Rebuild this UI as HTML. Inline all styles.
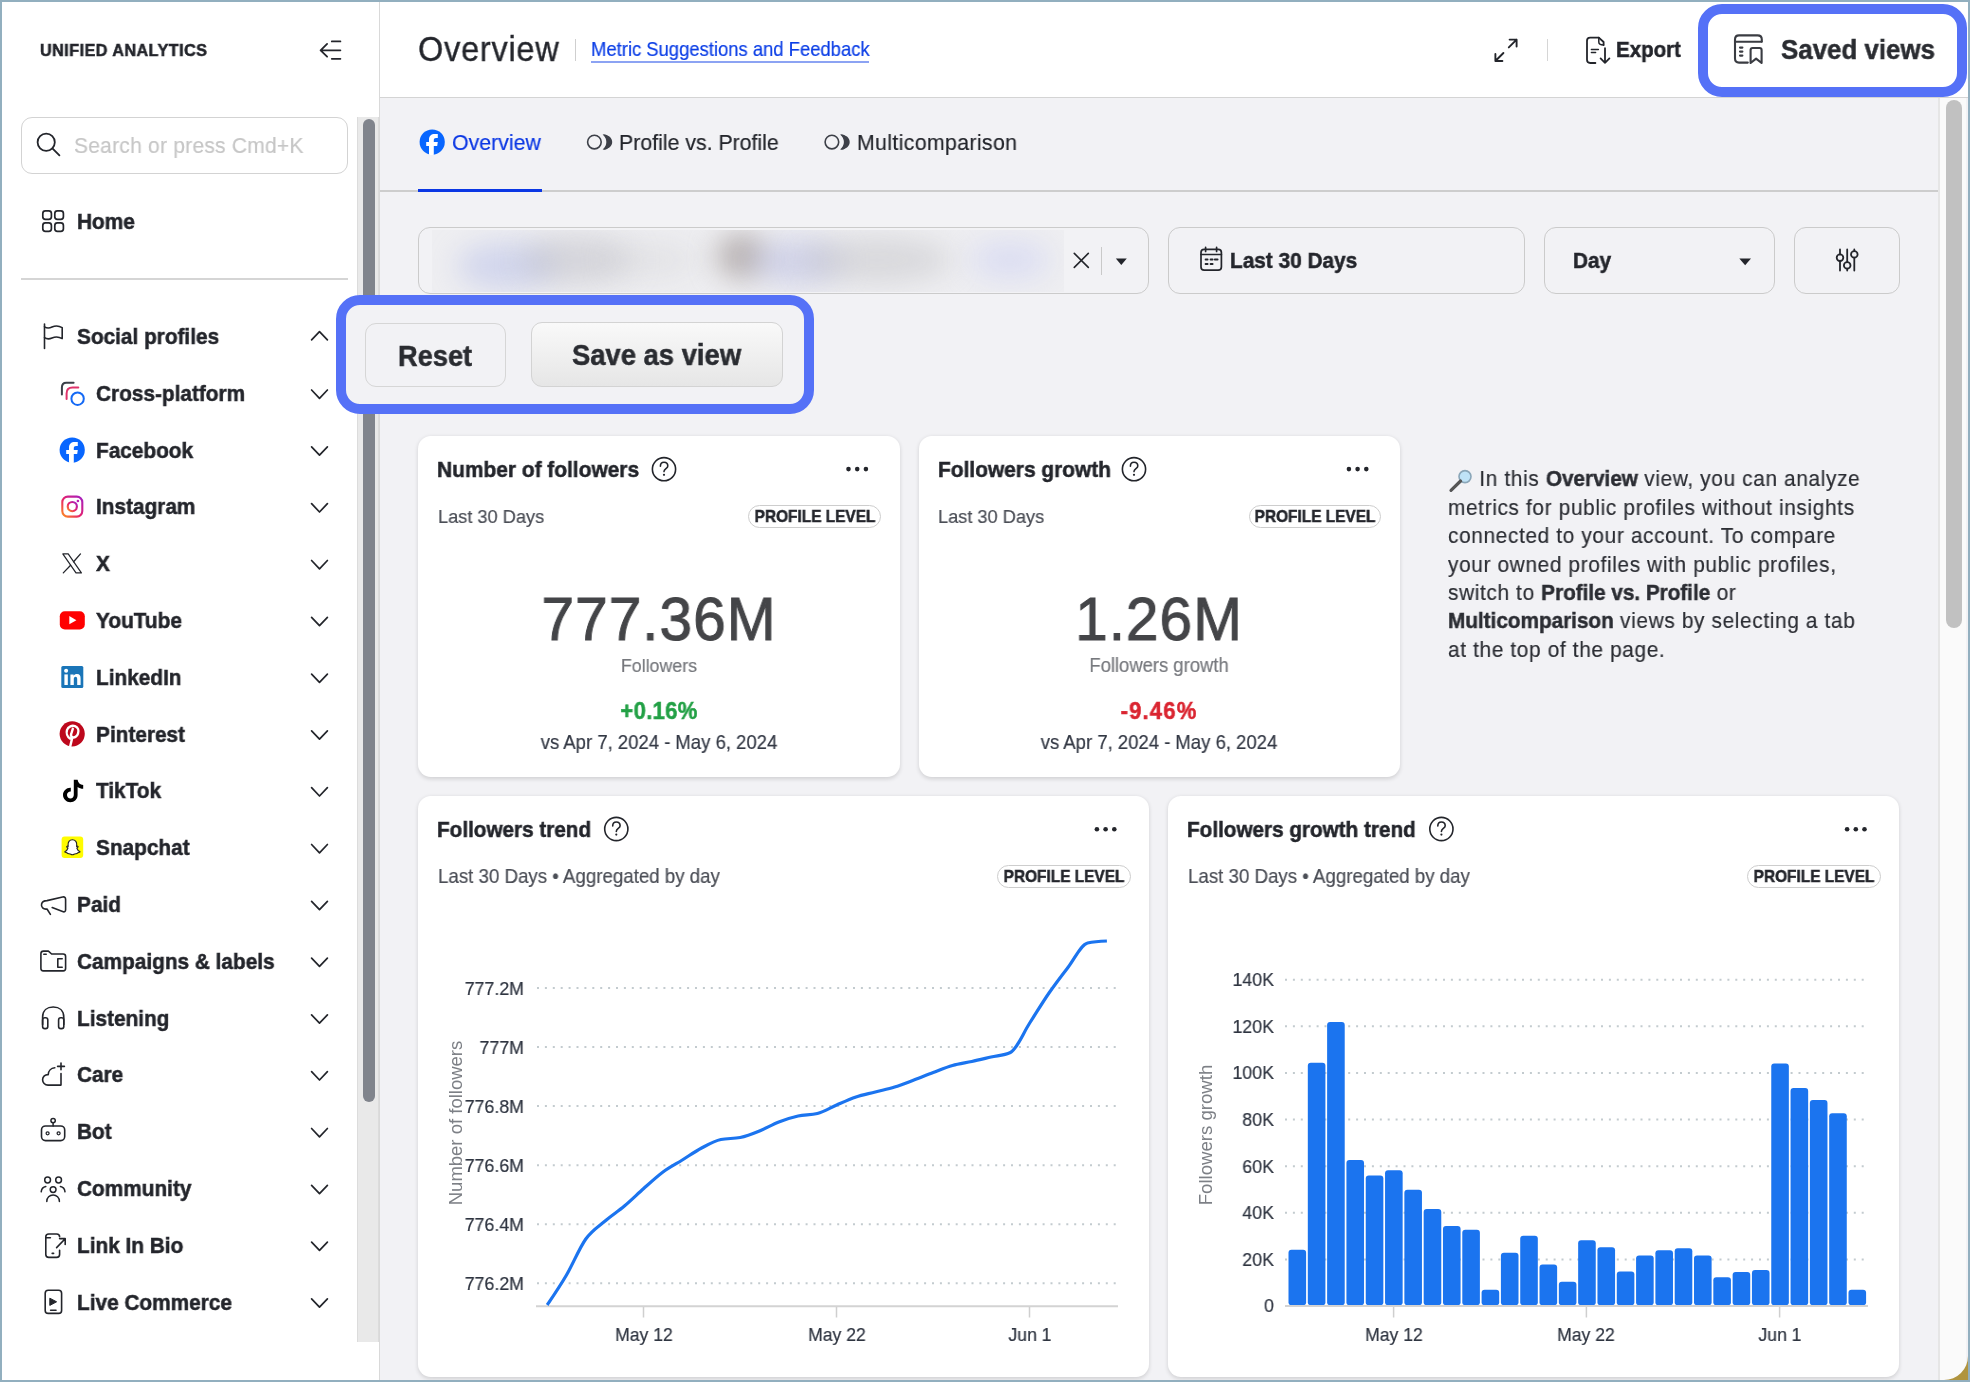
<!DOCTYPE html>
<html><head><meta charset="utf-8"><title>Overview</title>
<style>
html,body{margin:0;padding:0;width:1970px;height:1382px;overflow:hidden;background:#f2f2f5}
body{position:relative;font-family:"Liberation Sans", sans-serif;-webkit-font-smoothing:antialiased}
.t{position:absolute;white-space:nowrap;will-change:transform;font-family:"Liberation Sans", sans-serif}
b{font-weight:700}
</style></head><body>
<div style="position:absolute;left:2px;top:2px;width:377px;height:1378px;background:#fff"></div>
<div style="position:absolute;left:379px;top:2px;width:1px;height:1378px;background:#d9d9d9"></div>
<div class="t" style="left:39.50px;transform-origin:0 50%;transform:scaleX(0.9479);top:1.20px;font-size:17.09px;line-height:100px;font-weight:700;color:#23252b;letter-spacing:0.47px;-webkit-text-stroke:0.5px #23252b;">UNIFIED ANALYTICS</div>
<div style="position:absolute;left:21px;top:117px;width:327px;height:57px;box-sizing:border-box;border:1px solid #d3d3d3;border-radius:11px;background:#fff"></div>
<div class="t" style="left:73.50px;transform-origin:0 50%;transform:scaleX(0.9479);top:95.80px;font-size:22.15px;line-height:100px;font-weight:400;color:#c6c6c6;letter-spacing:0.26px;-webkit-text-stroke:0.2px #c6c6c6;">Search or press Cmd+K</div>
<div class="t" style="left:77.30px;transform-origin:0 50%;transform:scaleX(0.9479);top:172.10px;font-size:21.94px;line-height:100px;font-weight:700;color:#23252b;letter-spacing:0.00px;-webkit-text-stroke:0.5px #23252b;">Home</div>
<div style="position:absolute;left:21px;top:277.5px;width:327px;height:2.0px;background:#d5d5d5"></div>
<div style="position:absolute;left:357px;top:117px;width:22px;height:1224.5px;background:#e9e9e9;border-left:1px solid #dcdcdc;border-right:1px solid #dcdcdc;box-sizing:border-box"></div>
<div style="position:absolute;left:362.8px;top:119px;width:12.399999999999977px;height:983px;background:#80848c;border-radius:7px"></div>
<div class="t" style="left:77.30px;transform-origin:0 50%;transform:scaleX(0.9479);top:287.20px;font-size:21.94px;line-height:100px;font-weight:700;color:#23252b;letter-spacing:0.00px;-webkit-text-stroke:0.5px #23252b;">Social profiles</div>
<div class="t" style="left:96.30px;transform-origin:0 50%;transform:scaleX(0.9479);top:343.70px;font-size:21.94px;line-height:100px;font-weight:700;color:#23252b;letter-spacing:0.00px;-webkit-text-stroke:0.5px #23252b;">Cross-platform</div>
<div class="t" style="left:96.30px;transform-origin:0 50%;transform:scaleX(0.9479);top:400.60px;font-size:21.94px;line-height:100px;font-weight:700;color:#23252b;letter-spacing:0.00px;-webkit-text-stroke:0.5px #23252b;">Facebook</div>
<div class="t" style="left:96.30px;transform-origin:0 50%;transform:scaleX(0.9479);top:457.40px;font-size:21.94px;line-height:100px;font-weight:700;color:#23252b;letter-spacing:0.00px;-webkit-text-stroke:0.5px #23252b;">Instagram</div>
<div class="t" style="left:96.30px;transform-origin:0 50%;transform:scaleX(0.9479);top:514.20px;font-size:21.94px;line-height:100px;font-weight:700;color:#23252b;letter-spacing:0.00px;-webkit-text-stroke:0.5px #23252b;">X</div>
<div class="t" style="left:96.30px;transform-origin:0 50%;transform:scaleX(0.9479);top:571.00px;font-size:21.94px;line-height:100px;font-weight:700;color:#23252b;letter-spacing:0.00px;-webkit-text-stroke:0.5px #23252b;">YouTube</div>
<div class="t" style="left:96.30px;transform-origin:0 50%;transform:scaleX(0.9479);top:627.80px;font-size:21.94px;line-height:100px;font-weight:700;color:#23252b;letter-spacing:0.00px;-webkit-text-stroke:0.5px #23252b;">LinkedIn</div>
<div class="t" style="left:96.30px;transform-origin:0 50%;transform:scaleX(0.9479);top:684.60px;font-size:21.94px;line-height:100px;font-weight:700;color:#23252b;letter-spacing:0.00px;-webkit-text-stroke:0.5px #23252b;">Pinterest</div>
<div class="t" style="left:96.30px;transform-origin:0 50%;transform:scaleX(0.9479);top:741.40px;font-size:21.94px;line-height:100px;font-weight:700;color:#23252b;letter-spacing:0.00px;-webkit-text-stroke:0.5px #23252b;">TikTok</div>
<div class="t" style="left:96.30px;transform-origin:0 50%;transform:scaleX(0.9479);top:798.20px;font-size:21.94px;line-height:100px;font-weight:700;color:#23252b;letter-spacing:0.00px;-webkit-text-stroke:0.5px #23252b;">Snapchat</div>
<div class="t" style="left:77.30px;transform-origin:0 50%;transform:scaleX(0.9479);top:855.00px;font-size:21.94px;line-height:100px;font-weight:700;color:#23252b;letter-spacing:0.00px;-webkit-text-stroke:0.5px #23252b;">Paid</div>
<div class="t" style="left:77.30px;transform-origin:0 50%;transform:scaleX(0.9479);top:911.80px;font-size:21.94px;line-height:100px;font-weight:700;color:#23252b;letter-spacing:0.00px;-webkit-text-stroke:0.5px #23252b;">Campaigns &amp; labels</div>
<div class="t" style="left:77.30px;transform-origin:0 50%;transform:scaleX(0.9479);top:968.60px;font-size:21.94px;line-height:100px;font-weight:700;color:#23252b;letter-spacing:0.00px;-webkit-text-stroke:0.5px #23252b;">Listening</div>
<div class="t" style="left:77.30px;transform-origin:0 50%;transform:scaleX(0.9479);top:1025.40px;font-size:21.94px;line-height:100px;font-weight:700;color:#23252b;letter-spacing:0.00px;-webkit-text-stroke:0.5px #23252b;">Care</div>
<div class="t" style="left:77.30px;transform-origin:0 50%;transform:scaleX(0.9479);top:1082.20px;font-size:21.94px;line-height:100px;font-weight:700;color:#23252b;letter-spacing:0.00px;-webkit-text-stroke:0.5px #23252b;">Bot</div>
<div class="t" style="left:77.30px;transform-origin:0 50%;transform:scaleX(0.9479);top:1139.00px;font-size:21.94px;line-height:100px;font-weight:700;color:#23252b;letter-spacing:0.00px;-webkit-text-stroke:0.5px #23252b;">Community</div>
<div class="t" style="left:77.30px;transform-origin:0 50%;transform:scaleX(0.9479);top:1195.80px;font-size:21.94px;line-height:100px;font-weight:700;color:#23252b;letter-spacing:0.00px;-webkit-text-stroke:0.5px #23252b;">Link In Bio</div>
<div class="t" style="left:77.30px;transform-origin:0 50%;transform:scaleX(0.9479);top:1252.60px;font-size:21.94px;line-height:100px;font-weight:700;color:#23252b;letter-spacing:0.00px;-webkit-text-stroke:0.5px #23252b;">Live Commerce</div>
<svg style="position:absolute;left:0;top:0" width="1970" height="1382" viewBox="0 0 1970 1382"><path d="M327.1 43.9 L320.6 50.3 L327.1 56.7 M320.6 50.3 H340.4 M331.8 41.4 H340.4 M331.8 58.8 H340.4" stroke="#23252b" stroke-width="1.8" stroke-linecap="round" stroke-linejoin="round" fill="none" /><circle cx="46.2" cy="142.2" r="8.6" stroke="#23252b" stroke-width="1.8" fill="none"/><path d="M52.4 148.4 L59.4 155.4" stroke="#23252b" stroke-width="1.8" stroke-linecap="round" stroke-linejoin="round" fill="none" /><rect x="42.8" y="210.8" width="8.6" height="8.6" rx="2.6" stroke="#23252b" stroke-width="1.7" fill="none"/><rect x="54.8" y="210.8" width="8.6" height="8.6" rx="2.6" stroke="#23252b" stroke-width="1.7" fill="none"/><rect x="42.8" y="222.8" width="8.6" height="8.6" rx="2.6" stroke="#23252b" stroke-width="1.7" fill="none"/><rect x="54.8" y="222.8" width="8.6" height="8.6" rx="2.6" stroke="#23252b" stroke-width="1.7" fill="none"/><path d="M311.6 339.9 L319.5 331.6 L327.4 339.9" stroke="#23252b" stroke-width="1.7" stroke-linecap="round" stroke-linejoin="round" fill="none" /><path d="M311.6 390.0 L319.5 398.29999999999995 L327.4 390.0" stroke="#23252b" stroke-width="1.7" stroke-linecap="round" stroke-linejoin="round" fill="none" /><path d="M311.6 446.90000000000003 L319.5 455.2 L327.4 446.90000000000003" stroke="#23252b" stroke-width="1.7" stroke-linecap="round" stroke-linejoin="round" fill="none" /><path d="M311.6 503.7 L319.5 511.99999999999994 L327.4 503.7" stroke="#23252b" stroke-width="1.7" stroke-linecap="round" stroke-linejoin="round" fill="none" /><path d="M311.6 560.5000000000001 L319.5 568.8000000000001 L327.4 560.5000000000001" stroke="#23252b" stroke-width="1.7" stroke-linecap="round" stroke-linejoin="round" fill="none" /><path d="M311.6 617.3000000000001 L319.5 625.6 L327.4 617.3000000000001" stroke="#23252b" stroke-width="1.7" stroke-linecap="round" stroke-linejoin="round" fill="none" /><path d="M311.6 674.1 L319.5 682.4 L327.4 674.1" stroke="#23252b" stroke-width="1.7" stroke-linecap="round" stroke-linejoin="round" fill="none" /><path d="M311.6 730.9000000000001 L319.5 739.2 L327.4 730.9000000000001" stroke="#23252b" stroke-width="1.7" stroke-linecap="round" stroke-linejoin="round" fill="none" /><path d="M311.6 787.7 L319.5 796.0 L327.4 787.7" stroke="#23252b" stroke-width="1.7" stroke-linecap="round" stroke-linejoin="round" fill="none" /><path d="M311.6 844.5000000000001 L319.5 852.8000000000001 L327.4 844.5000000000001" stroke="#23252b" stroke-width="1.7" stroke-linecap="round" stroke-linejoin="round" fill="none" /><path d="M311.6 901.3000000000001 L319.5 909.6 L327.4 901.3000000000001" stroke="#23252b" stroke-width="1.7" stroke-linecap="round" stroke-linejoin="round" fill="none" /><path d="M311.6 958.1 L319.5 966.4 L327.4 958.1" stroke="#23252b" stroke-width="1.7" stroke-linecap="round" stroke-linejoin="round" fill="none" /><path d="M311.6 1014.9 L319.5 1023.1999999999999 L327.4 1014.9" stroke="#23252b" stroke-width="1.7" stroke-linecap="round" stroke-linejoin="round" fill="none" /><path d="M311.6 1071.7 L319.5 1080.0000000000002 L327.4 1071.7" stroke="#23252b" stroke-width="1.7" stroke-linecap="round" stroke-linejoin="round" fill="none" /><path d="M311.6 1128.5 L319.5 1136.8000000000002 L327.4 1128.5" stroke="#23252b" stroke-width="1.7" stroke-linecap="round" stroke-linejoin="round" fill="none" /><path d="M311.6 1185.3 L319.5 1193.6000000000001 L327.4 1185.3" stroke="#23252b" stroke-width="1.7" stroke-linecap="round" stroke-linejoin="round" fill="none" /><path d="M311.6 1242.1 L319.5 1250.4 L327.4 1242.1" stroke="#23252b" stroke-width="1.7" stroke-linecap="round" stroke-linejoin="round" fill="none" /><path d="M311.6 1298.8999999999999 L319.5 1307.2 L327.4 1298.8999999999999" stroke="#23252b" stroke-width="1.7" stroke-linecap="round" stroke-linejoin="round" fill="none" /><path d="M44.5 324.0 V348.4" stroke="#23252b" stroke-width="1.6" stroke-linecap="round" stroke-linejoin="round" fill="none" /><path d="M44.5 326.79999999999995 C47 328.4 49.5 328.2 52 327.0 C55 325.59999999999997 58.5 325.4 62.2 327.59999999999997 V338.59999999999997 C58.5 336.4 55 336.59999999999997 52 338.0 C49.5 339.2 47 339.4 44.5 337.59999999999997" stroke="#23252b" stroke-width="1.6" stroke-linecap="round" stroke-linejoin="round" fill="none" /><path d="M61.9 394.5 V387.5 Q61.9 382.7 66.3 382.7 H73.6" stroke="#3a3f47" stroke-width="2.0" stroke-linecap="round" stroke-linejoin="round" fill="none" /><path d="M66.6 399.09999999999997 V393.4 Q66.6 387.5 72.5 387.5 H78.3" stroke="#e0336b" stroke-width="2.0" stroke-linecap="round" stroke-linejoin="round" fill="none" /><circle cx="77.6" cy="398.7" r="6.2" stroke="#1469f5" stroke-width="2" fill="none"/><circle cx="72.2" cy="450.0" r="12.6" fill="#0866ff"/><path d="M69.0 462.8 V453.9 H66.2 V450.0 H69.0 V447.8 C69.0 444.0 71.2 442.1 74.8 442.1 H77.8 V446.0 H76.0 C74.60000000000001 446.0 73.8 446.8 73.8 448.2 V450.0 H77.8 L77.2 453.9 H73.8 V462.8 C72.4 463.1 70.4 463.1 69.0 462.8 Z" fill="#fff"/><defs><linearGradient id="igg" x1="0" y1="1" x2="1" y2="0"><stop offset="0" stop-color="#fd8d1e"/><stop offset="0.45" stop-color="#e7226b"/><stop offset="1" stop-color="#a21fc4"/></linearGradient></defs><rect x="62.3" y="496.59999999999997" width="20" height="20" rx="5.5" stroke="url(#igg)" stroke-width="2.1" fill="none"/><circle cx="72.3" cy="506.59999999999997" r="4.6" stroke="url(#igg)" stroke-width="2.1" fill="none"/><circle cx="77.9" cy="500.99999999999994" r="1.3" fill="#b81fb0"/><path d="M62.8 553.9000000000001 H68.2 L81.4 572.9000000000001 H76 Z" stroke="#23252b" stroke-width="1.2" fill="none" stroke-linejoin="round"/><path d="M80.5 553.9000000000001 L73.6 561.8000000000001 M70.6 565.2 L63.3 572.9000000000001" stroke="#23252b" stroke-width="1.3" stroke-linecap="round" stroke-linejoin="round" fill="none" /><rect x="59.8" y="611.2" width="25" height="18.2" rx="5" fill="#ff0000"/><path d="M69.3 616.1 L76.4 620.2 L69.3 624.3000000000001 Z" fill="#fff"/><rect x="61.3" y="666.0" width="22" height="22" rx="1.5" fill="#1a75b8"/><rect x="64.4" y="674.4" width="3.4" height="10.6" fill="#fff"/><circle cx="66.1" cy="670.8" r="2" fill="#fff"/><path d="M70.4 674.4 H73.6 V675.8 C74.2 674.7 75.5 674.1 77 674.1 C79.8 674.1 80.6 675.9 80.6 678.4 V685.0 H77.2 V679.2 C77.2 677.8 76.8 676.8 75.6 676.8 C74.3 676.8 73.8 677.8 73.8 679.2 V685.0 H70.4 Z" fill="#fff"/><circle cx="72.2" cy="733.8000000000001" r="12.6" fill="#bd081c"/><path d="M70.2 746.4000000000001 L72.2 738.0000000000001 M70.2 738.6 C67 736.8000000000001 66.2 732.8000000000001 67 730.0000000000001 C68.2 726.2 72.2 725.2 75 726.2 C78.2 727.4000000000001 79 730.6 78 733.6 C77 736.8000000000001 74.2 738.0000000000001 72.4 737.2 C71 736.6 70.8 735.2 71.2 734.0000000000001 L72.8 728.8000000000001" stroke="#fff" stroke-width="2.4" stroke-linecap="round" fill="none"/><path d="M73.8 779.7 H77.6 C78 782.8000000000001 80 784.8000000000001 83.2 785.0 V788.8000000000001 C81 788.8000000000001 79.2 788.1 77.6 787.0 V795.0 C77.6 799.2 74.4 802.2 70.4 802.2 C66.4 802.2 63 799.0 63 795.0 C63 790.8000000000001 66.6 787.4 70.8 787.7 V791.6 C68.8 791.4 67 793.0 67 795.0 C67 796.9 68.5 798.4 70.4 798.4 C72.4 798.4 73.8 796.9 73.8 795.0 Z" fill="#000"/><rect x="61.6" y="836.6000000000001" width="21.6" height="21.5" rx="3" fill="#fffc00"/><path d="M72.4 839.8000000000001 C69.2 839.8000000000001 67.9 842.4000000000001 68.1 844.8000000000001 L68.2 846.4000000000001 C67.4 846.0000000000001 66.6 846.1000000000001 66.6 846.8000000000001 C66.6 847.4000000000001 67.6 847.8000000000001 68 848.0000000000001 C67.4 849.8000000000001 66.2 851.2 64.8 851.8000000000001 C65.4 852.6000000000001 66.6 852.4000000000001 67.2 853.0000000000001 C67.8 854.0000000000001 69.4 853.4000000000001 70.8 854.2 C71.6 854.7 73.2 854.7 74 854.2 C75.4 853.4000000000001 77 854.0000000000001 77.6 853.0000000000001 C78.2 852.4000000000001 79.4 852.6000000000001 80 851.8000000000001 C78.6 851.2 77.4 849.8000000000001 76.8 848.0000000000001 C77.2 847.8000000000001 78.2 847.4000000000001 78.2 846.8000000000001 C78.2 846.1000000000001 77.4 846.0000000000001 76.6 846.4000000000001 L76.7 844.8000000000001 C76.9 842.4000000000001 75.6 839.8000000000001 72.4 839.8000000000001 Z" fill="#fff" stroke="#222" stroke-width="1.1" stroke-linejoin="round"/><path d="M47 909.0 C43.4 909.6 40.8 907.2 41.6 904.0 C42.2 901.6 44.4 900.6 47 900.6 L62.6 897.0 C64.6 896.5 65.6 897.4000000000001 65.6 899.4000000000001 V909.8000000000001 C65.6 911.6 64.4 912.4000000000001 62.6 911.6 L52.2 907.6 M47 909.0 L50.4 914.4000000000001" stroke="#23252b" stroke-width="1.6" stroke-linecap="round" stroke-linejoin="round" fill="none" /><path d="M40.9 953.7 C40.9 952.0 41.8 951.1 43.5 951.1 H48.4 L51.6 954.0 H63.2 C64.9 954.0 65.6 954.8 65.6 956.4 V968.6 C65.6 970.2 64.9 970.9 63.2 970.9 H43.3 C41.7 970.9 40.9 970.2 40.9 968.6 Z" stroke="#23252b" stroke-width="1.6" stroke-linecap="round" stroke-linejoin="round" fill="none" /><path d="M43.8 954.2 H46.2" stroke="#23252b" stroke-width="1.6" stroke-linecap="round" stroke-linejoin="round" fill="none" /><path d="M62.2 958.8 H57.8 V967.2 H62.2" stroke="#23252b" stroke-width="1.6" stroke-linecap="round" stroke-linejoin="round" fill="none" /><path d="M42.6 1024.3999999999999 V1017.1999999999999 C42.6 1010.4 47.2 1007.0 53.2 1007.0 C59.2 1007.0 63.8 1010.4 63.8 1017.1999999999999 V1024.3999999999999" stroke="#23252b" stroke-width="1.6" stroke-linecap="round" stroke-linejoin="round" fill="none" /><rect x="42.6" y="1017.8" width="5.2" height="10.8" rx="2.2" stroke="#23252b" stroke-width="1.6" fill="none"/><rect x="58.6" y="1017.8" width="5.2" height="10.8" rx="2.2" stroke="#23252b" stroke-width="1.6" fill="none"/><path d="M61 1073.6000000000001 V1085.1000000000001 H48 C44.8 1085.1000000000001 42.6 1082.6000000000001 42.6 1079.8000000000002 C42.6 1076.6000000000001 45.2 1074.4 48.2 1074.6000000000001 C48.4 1071.0000000000002 50.8 1068.0000000000002 54.8 1067.8000000000002" stroke="#23252b" stroke-width="1.6" stroke-linecap="round" stroke-linejoin="round" fill="none" /><path d="M61 1063.0000000000002 V1069.8000000000002 M57.6 1066.4 H64.4" stroke="#23252b" stroke-width="1.6" stroke-linecap="round" stroke-linejoin="round" fill="none" /><rect x="41.5" y="1126.0" width="23.2" height="14.6" rx="4" stroke="#23252b" stroke-width="1.6" fill="none"/><circle cx="53.1" cy="1120.6000000000001" r="2.2" stroke="#23252b" stroke-width="1.5" fill="none"/><path d="M53.1 1122.8000000000002 V1126.0" stroke="#23252b" stroke-width="1.5" stroke-linecap="round" stroke-linejoin="round" fill="none" /><circle cx="47.6" cy="1133.3000000000002" r="1.5" stroke="#23252b" stroke-width="1.3" fill="none"/><circle cx="58.6" cy="1133.3000000000002" r="1.5" stroke="#23252b" stroke-width="1.3" fill="none"/><circle cx="47.6" cy="1180.0" r="2.9" stroke="#23252b" stroke-width="1.5" fill="none"/><circle cx="58.6" cy="1180.0" r="2.9" stroke="#23252b" stroke-width="1.5" fill="none"/><circle cx="53.1" cy="1189.6000000000001" r="2.9" stroke="#23252b" stroke-width="1.5" fill="none"/><path d="M41.2 1191.8 C41.6 1188.6000000000001 43.4 1187.0 45.8 1186.6000000000001" stroke="#23252b" stroke-width="1.5" stroke-linecap="round" stroke-linejoin="round" fill="none" /><path d="M65 1191.8 C64.6 1188.6000000000001 62.8 1187.0 60.4 1186.6000000000001" stroke="#23252b" stroke-width="1.5" stroke-linecap="round" stroke-linejoin="round" fill="none" /><path d="M46.8 1201.4 C46.8 1197.6000000000001 49.6 1195.0 53.1 1195.0 C56.6 1195.0 59.4 1197.6000000000001 59.4 1201.4" stroke="#23252b" stroke-width="1.5" stroke-linecap="round" stroke-linejoin="round" fill="none" /><path d="M59.6 1250.2 V1254.6 C59.6 1256.6 58.6 1257.4 56.6 1257.4 H48.8 C46.8 1257.4 45.8 1256.6 45.8 1254.6 V1236.8 C45.8 1234.8 46.8 1234.0 48.8 1234.0 H56.6 C58.6 1234.0 59.6 1234.8 59.6 1236.8" stroke="#23252b" stroke-width="1.6" stroke-linecap="round" stroke-linejoin="round" fill="none" /><path d="M45.8 1237.8 H50.4 M52.2 1253.4 H53.6" stroke="#23252b" stroke-width="1.6" stroke-linecap="round" stroke-linejoin="round" fill="none" /><path d="M56.6 1247.6 L65.2 1238.8 M59.6 1238.6 H65.2 V1244.4" stroke="#23252b" stroke-width="1.6" stroke-linecap="round" stroke-linejoin="round" fill="none" /><rect x="45.2" y="1290.2" width="16.4" height="23.2" rx="3" stroke="#23252b" stroke-width="1.6" fill="none"/><path d="M49.8 1298.2 L56.6 1301.8 L49.8 1305.3999999999999 Z" fill="#23252b" stroke="#23252b" stroke-width="1" stroke-linejoin="round"/><path d="M50.6 1310.2 H56" stroke="#23252b" stroke-width="1.6" stroke-linecap="round" stroke-linejoin="round" fill="none" /></svg>
<div style="position:absolute;left:380px;top:2px;width:1588px;height:1378px;background:#f2f2f5"></div>
<div style="position:absolute;left:380px;top:2px;width:1588px;height:95px;background:#fff"></div>
<div style="position:absolute;left:380px;top:97px;width:1588px;height:1px;background:#d4d4d4"></div>
<div class="t" style="left:418.20px;transform-origin:0 50%;transform:scaleX(0.9479);top:-1.20px;font-size:34.29px;line-height:100px;font-weight:400;color:#23252b;letter-spacing:0.79px;-webkit-text-stroke:0.35px #23252b;">Overview</div>
<div style="position:absolute;left:575px;top:39px;width:1.2000000000000455px;height:22px;background:#cfcfcf"></div>
<div class="t" style="left:590.50px;transform-origin:0 50%;transform:scaleX(0.9479);top:-1.00px;font-size:19.46px;line-height:100px;font-weight:400;color:#0b3ee6;letter-spacing:0.00px;-webkit-text-stroke:0.2px #0b3ee6;">Metric Suggestions and Feedback</div>
<div style="position:absolute;left:590.5px;top:61px;width:278.5px;height:2px;background:#8ca3f3"></div>
<div class="t" style="left:1615.50px;transform-origin:0 50%;transform:scaleX(0.9479);top:-0.20px;font-size:21.63px;line-height:100px;font-weight:700;color:#23252b;letter-spacing:0.00px;-webkit-text-stroke:0.5px #23252b;">Export</div>
<div class="t" style="left:1780.50px;transform-origin:0 50%;transform:scaleX(0.9479);top:0.30px;font-size:27.32px;line-height:100px;font-weight:700;color:#2a2c31;letter-spacing:0.00px;-webkit-text-stroke:0.5px #2a2c31;filter:blur(0.4px);">Saved views</div>
<div class="t" style="left:451.50px;transform-origin:0 50%;transform:scaleX(0.9479);top:93.00px;font-size:22.47px;line-height:100px;font-weight:400;color:#0b37e4;letter-spacing:0.00px;-webkit-text-stroke:0.2px #0b37e4;">Overview</div>
<div class="t" style="left:618.80px;transform-origin:0 50%;transform:scaleX(0.9479);top:93.00px;font-size:22.47px;line-height:100px;font-weight:400;color:#23252b;letter-spacing:0.00px;-webkit-text-stroke:0.2px #23252b;">Profile vs. Profile</div>
<div class="t" style="left:857.00px;transform-origin:0 50%;transform:scaleX(0.9479);top:93.00px;font-size:22.47px;line-height:100px;font-weight:400;color:#23252b;letter-spacing:0.37px;-webkit-text-stroke:0.2px #23252b;">Multicomparison</div>
<div style="position:absolute;left:380px;top:189.5px;width:1558px;height:2.0px;background:#cdcdcd"></div>
<div style="position:absolute;left:418px;top:188.6px;width:124px;height:3.200000000000017px;background:#0b37e4"></div>
<div style="position:absolute;left:1938px;top:98px;width:2px;height:1282px;background:#e6e6e6"></div>
<div style="position:absolute;left:1940px;top:98px;width:26px;height:1282px;background:#fafafa"></div>
<div style="position:absolute;left:1946px;top:100px;width:16px;height:528px;background:#c1c1c1;border-radius:8px"></div>
<div style="position:absolute;left:418px;top:227px;width:731px;height:67px;box-sizing:border-box;border:1px solid #cbcbcb;border-radius:12px;background:#f2f2f5"></div>
<div style="position:absolute;left:1168px;top:227px;width:357px;height:67px;box-sizing:border-box;border:1px solid #cbcbcb;border-radius:12px;background:#f2f2f5"></div>
<div style="position:absolute;left:1544px;top:227px;width:231px;height:67px;box-sizing:border-box;border:1px solid #cbcbcb;border-radius:12px;background:#f2f2f5"></div>
<div style="position:absolute;left:1794px;top:227px;width:106px;height:67px;box-sizing:border-box;border:1px solid #cbcbcb;border-radius:12px;background:#f2f2f5"></div>
<div style="position:absolute;left:432px;top:230px;width:632px;height:62px;overflow:hidden;background:rgba(225,225,228,0.22)"><div style="position:absolute;left:25.0px;top:12.0px;width:100px;height:48px;border-radius:50%;background:rgba(172,182,232,0.42);filter:blur(14px)"></div><div style="position:absolute;left:90.0px;top:5.0px;width:110px;height:50px;border-radius:50%;background:rgba(185,185,192,0.45);filter:blur(14px)"></div><div style="position:absolute;left:175.0px;top:10.0px;width:90px;height:40px;border-radius:50%;background:rgba(205,205,210,0.30);filter:blur(14px)"></div><div style="position:absolute;left:284.0px;top:3.0px;width:50px;height:46px;border-radius:50%;background:rgba(150,140,138,0.60);filter:blur(14px)"></div><div style="position:absolute;left:320.0px;top:9.0px;width:90px;height:46px;border-radius:50%;background:rgba(172,177,225,0.42);filter:blur(14px)"></div><div style="position:absolute;left:370.0px;top:7.0px;width:150px;height:46px;border-radius:50%;background:rgba(190,190,195,0.45);filter:blur(14px)"></div><div style="position:absolute;left:538.0px;top:10.0px;width:80px;height:40px;border-radius:50%;background:rgba(195,200,245,0.40);filter:blur(14px)"></div></div>
<div class="t" style="left:1230.20px;transform-origin:0 50%;transform:scaleX(0.9479);top:211.30px;font-size:21.94px;line-height:100px;font-weight:700;color:#23252b;letter-spacing:0.00px;-webkit-text-stroke:0.5px #23252b;">Last 30 Days</div>
<div class="t" style="left:1573.00px;transform-origin:0 50%;transform:scaleX(0.9479);top:211.30px;font-size:21.94px;line-height:100px;font-weight:700;color:#23252b;letter-spacing:0.00px;-webkit-text-stroke:0.5px #23252b;">Day</div>
<div style="position:absolute;left:1547px;top:39px;width:1.2999999999999545px;height:22px;background:#d6d6d6"></div>
<div style="position:absolute;left:1100.6px;top:246.5px;width:1.300000000000182px;height:28.5px;background:#c9c9c9"></div>
<svg style="position:absolute;left:0;top:0" width="1970" height="1382" viewBox="0 0 1970 1382"><path d="M1508.8 47.4 L1516.6 39.6 M1509.6 39.6 H1516.6 V46.6" stroke="#23252b" stroke-width="1.9" stroke-linecap="round" stroke-linejoin="round" fill="none" /><path d="M1503.4 53.0 L1495.4 61 M1495.4 54 V61 H1502.4" stroke="#23252b" stroke-width="1.9" stroke-linecap="round" stroke-linejoin="round" fill="none" /><path d="M1603.6 45 V42 L1598.8 37.6 H1590.2 C1588 37.6 1587 38.6 1587 40.8 V59.8 C1587 62 1588 63 1590.2 63 H1595.4" stroke="#23252b" stroke-width="1.8" stroke-linecap="round" stroke-linejoin="round" fill="none" /><path d="M1598.8 37.6 V42 C1598.8 43.2 1599.4 45 1603.6 45" stroke="#23252b" stroke-width="1.5" stroke-linecap="round" stroke-linejoin="round" fill="none" /><path d="M1591.4 49.5 H1598.4 M1591.4 52.6 H1595.6" stroke="#23252b" stroke-width="1.5" stroke-linecap="round" stroke-linejoin="round" fill="none" /><path d="M1605 48.2 V62.8 M1600.6 58.4 L1605 62.8 L1609.4 58.4" stroke="#23252b" stroke-width="1.8" stroke-linecap="round" stroke-linejoin="round" fill="none" /><path d="M1747.8 62.6 H1739 C1736.2 62.6 1735 61.4 1735 58.6 V39.6 C1735 36.6 1736.2 35.4 1739 35.4 H1757.6 C1760.4 35.4 1761.8 36.6 1761.8 39.6 V41.6" stroke="#3a3c42" stroke-width="2.1" stroke-linecap="round" stroke-linejoin="round" fill="none" /><path d="M1735 41.8 H1761.6" stroke="#3a3c42" stroke-width="2.1" stroke-linecap="round" stroke-linejoin="round" fill="none" /><path d="M1740 47.6 H1742.4 M1740 51.6 H1742.4 M1740 55.6 H1742.4" stroke="#3a3c42" stroke-width="2.1" stroke-linecap="round" stroke-linejoin="round" fill="none" /><path d="M1750.6 63 V50 C1750.6 48.6 1751.2 48 1752.6 48 H1759.6 C1761 48 1761.6 48.6 1761.6 50 V63 L1756.1 58.6 Z" stroke="#3a3c42" stroke-width="2.1" stroke-linecap="round" stroke-linejoin="round" fill="none" /><circle cx="432.2" cy="142" r="12.6" fill="#0866ff"/><path d="M429.0 154.79999999999998 V145.9 H426.2 V142 H429.0 V139.8 C429.0 136 431.2 134.1 434.8 134.1 H437.8 V138 H436.0 C434.59999999999997 138 433.8 138.8 433.8 140.2 V142 H437.8 L437.2 145.9 H433.8 V154.79999999999998 C432.4 155.1 430.4 155.1 429.0 154.79999999999998 Z" fill="#fff"/><circle cx="594.4" cy="142.1" r="6.8" stroke="#3d4048" stroke-width="1.6" fill="none"/><path d="M603 134.2 A7.9 7.9 0 0 1 603 150 A10 10 0 0 0 603 134.2 Z" fill="#3d4048"/><path d="M602.6 134.6 C609 134.8 612.2 138.2 612.2 142.1 C612.2 146 609 149.4 602.6 149.6 C605.2 147.4 606.4 145 606.4 142.1 C606.4 139.2 605.2 136.8 602.6 134.6 Z" fill="#3d4048"/><circle cx="831.9" cy="142.1" r="6.8" stroke="#3d4048" stroke-width="1.6" fill="none"/><path d="M840.5 134.2 A7.9 7.9 0 0 1 840.5 150 A10 10 0 0 0 840.5 134.2 Z" fill="#3d4048"/><path d="M840.1 134.6 C846.5 134.8 849.7 138.2 849.7 142.1 C849.7 146 846.5 149.4 840.1 149.6 C842.7 147.4 843.9 145 843.9 142.1 C843.9 139.2 842.7 136.8 840.1 134.6 Z" fill="#3d4048"/><path d="M1074.3 253.4 L1088.3 267.4 M1088.3 253.4 L1074.3 267.4" stroke="#23252b" stroke-width="1.6" stroke-linecap="round" stroke-linejoin="round" fill="none" /><path d="M1115.8 258.4 H1126.8 L1121.3 265 Z" fill="#23252b"/><path d="M1739.3 258.6 H1751 L1745.15 265.2 Z" fill="#23252b"/><rect x="1201" y="249.4" width="20.4" height="20.8" rx="3.2" stroke="#23252b" stroke-width="1.7" fill="none"/><path d="M1201 254.5 H1221.4 M1205.6 247.4 V251.4 M1216.6 247.4 V251.4" stroke="#23252b" stroke-width="1.7" stroke-linecap="round" stroke-linejoin="round" fill="none" /><path d="M1205.6 259.5 H1207.6 M1210.6 259.5 H1212.6 M1214.8 259.5 H1217.6 M1205.6 264 H1207.6 M1210.6 264 H1212.6" stroke="#23252b" stroke-width="1.9" stroke-linecap="round" stroke-linejoin="round" fill="none" /><path d="M1840 249.4 V254.4 M1840 261 V270.6 M1847.2 249.4 V262.1 M1847.2 268.7 V270.6 M1854.3 249.4 V251.1 M1854.3 257.7 V270.6" stroke="#23252b" stroke-width="1.8" stroke-linecap="round" stroke-linejoin="round" fill="none" /><circle cx="1840" cy="257.7" r="3.3" stroke="#23252b" stroke-width="1.8" fill="none"/><circle cx="1847.2" cy="265.4" r="3.3" stroke="#23252b" stroke-width="1.8" fill="none"/><circle cx="1854.3" cy="254.4" r="3.3" stroke="#23252b" stroke-width="1.8" fill="none"/></svg>
<div style="position:absolute;left:418px;top:436px;width:482px;height:341px;background:#fff;border-radius:13px;box-shadow:0 1.5px 4px rgba(0,0,0,0.14)"></div>
<div style="position:absolute;left:919px;top:436px;width:481px;height:341px;background:#fff;border-radius:13px;box-shadow:0 1.5px 4px rgba(0,0,0,0.14)"></div>
<div class="t" style="left:437.20px;transform-origin:0 50%;transform:scaleX(0.9479);top:419.80px;font-size:22.05px;line-height:100px;font-weight:700;color:#23252b;letter-spacing:0.00px;-webkit-text-stroke:0.5px #23252b;">Number of followers</div>
<div class="t" style="left:437.50px;transform-origin:0 50%;transform:scaleX(0.9479);top:466.90px;font-size:19.20px;line-height:100px;font-weight:400;color:#4b4e56;letter-spacing:0.00px;-webkit-text-stroke:0.2px #4b4e56;">Last 30 Days</div>
<div style="position:absolute;left:748px;top:505.09999999999997px;width:133px;height:22.599999999999966px;box-sizing:border-box;border:1px solid #cdcdcd;border-radius:12px;background:#fff"></div>
<div class="t" style="left:214.50px;width:1200px;text-align:center;transform-origin:50% 50%;transform:scaleX(0.9479);top:466.20px;font-size:16.25px;line-height:100px;font-weight:700;color:#23252b;letter-spacing:0.00px;-webkit-text-stroke:0.5px #23252b;">PROFILE LEVEL</div>
<div class="t" style="left:58.50px;width:1200px;text-align:center;transform-origin:50% 50%;transform:scaleX(0.9479);top:568.70px;font-size:61.82px;line-height:100px;font-weight:400;color:#444548;letter-spacing:1.05px;-webkit-text-stroke:1px #444548;">777.36M</div>
<div class="t" style="left:58.50px;width:1200px;text-align:center;transform-origin:50% 50%;transform:scaleX(0.9479);top:615.80px;font-size:18.78px;line-height:100px;font-weight:400;color:#76787d;letter-spacing:0.00px;-webkit-text-stroke:0.2px #76787d;">Followers</div>
<div class="t" style="left:58.80px;width:1200px;text-align:center;transform-origin:50% 50%;transform:scaleX(0.9479);top:660.70px;font-size:23.21px;line-height:100px;font-weight:700;color:#22a045;letter-spacing:0.32px;-webkit-text-stroke:0.5px #22a045;">+0.16%</div>
<div class="t" style="left:58.50px;width:1200px;text-align:center;transform-origin:50% 50%;transform:scaleX(0.9479);top:692.20px;font-size:19.52px;line-height:100px;font-weight:400;color:#333844;letter-spacing:0.00px;-webkit-text-stroke:0.2px #333844;">vs Apr 7, 2024 - May 6, 2024</div>
<div class="t" style="left:938.00px;transform-origin:0 50%;transform:scaleX(0.9479);top:419.80px;font-size:22.05px;line-height:100px;font-weight:700;color:#23252b;letter-spacing:0.00px;-webkit-text-stroke:0.5px #23252b;">Followers growth</div>
<div class="t" style="left:938.20px;transform-origin:0 50%;transform:scaleX(0.9479);top:466.90px;font-size:19.20px;line-height:100px;font-weight:400;color:#4b4e56;letter-spacing:0.00px;-webkit-text-stroke:0.2px #4b4e56;">Last 30 Days</div>
<div style="position:absolute;left:1249px;top:505.09999999999997px;width:132px;height:22.599999999999966px;box-sizing:border-box;border:1px solid #cdcdcd;border-radius:12px;background:#fff"></div>
<div class="t" style="left:715.00px;width:1200px;text-align:center;transform-origin:50% 50%;transform:scaleX(0.9479);top:466.20px;font-size:16.25px;line-height:100px;font-weight:700;color:#23252b;letter-spacing:0.00px;-webkit-text-stroke:0.5px #23252b;">PROFILE LEVEL</div>
<div class="t" style="left:559.00px;width:1200px;text-align:center;transform-origin:50% 50%;transform:scaleX(0.9479);top:568.70px;font-size:61.82px;line-height:100px;font-weight:400;color:#444548;letter-spacing:1.05px;-webkit-text-stroke:1px #444548;">1.26M</div>
<div class="t" style="left:559.00px;width:1200px;text-align:center;transform-origin:50% 50%;transform:scaleX(0.9479);top:614.80px;font-size:19.46px;line-height:100px;font-weight:400;color:#76787d;letter-spacing:0.00px;-webkit-text-stroke:0.2px #76787d;">Followers growth</div>
<div class="t" style="left:559.20px;width:1200px;text-align:center;transform-origin:50% 50%;transform:scaleX(0.9479);top:660.70px;font-size:23.21px;line-height:100px;font-weight:700;color:#da2430;letter-spacing:1.27px;-webkit-text-stroke:0.5px #da2430;">-9.46%</div>
<div class="t" style="left:559.00px;width:1200px;text-align:center;transform-origin:50% 50%;transform:scaleX(0.9479);top:692.20px;font-size:19.52px;line-height:100px;font-weight:400;color:#333844;letter-spacing:0.00px;-webkit-text-stroke:0.2px #333844;">vs Apr 7, 2024 - May 6, 2024</div>
<div class="t" style="left:1447.50px;transform-origin:0 50%;transform:scaleX(0.9479);top:429.30px;font-size:21.94px;line-height:100px;font-weight:400;color:#2b2d33;letter-spacing:0.69px;-webkit-text-stroke:0.2px #2b2d33;"><span style="display:inline-block;width:33px"></span>In this <b style="letter-spacing:-0.05px;-webkit-text-stroke:0.45px #2b2d33">Overview</b> view, you can analyze</div>
<div class="t" style="left:1447.50px;transform-origin:0 50%;transform:scaleX(0.9479);top:457.70px;font-size:21.94px;line-height:100px;font-weight:400;color:#2b2d33;letter-spacing:0.69px;-webkit-text-stroke:0.2px #2b2d33;">metrics for public profiles without insights</div>
<div class="t" style="left:1447.50px;transform-origin:0 50%;transform:scaleX(0.9479);top:486.10px;font-size:21.94px;line-height:100px;font-weight:400;color:#2b2d33;letter-spacing:0.69px;-webkit-text-stroke:0.2px #2b2d33;">connected to your account. To compare</div>
<div class="t" style="left:1447.50px;transform-origin:0 50%;transform:scaleX(0.9479);top:514.50px;font-size:21.94px;line-height:100px;font-weight:400;color:#2b2d33;letter-spacing:0.69px;-webkit-text-stroke:0.2px #2b2d33;">your owned profiles with public profiles,</div>
<div class="t" style="left:1447.50px;transform-origin:0 50%;transform:scaleX(0.9479);top:542.90px;font-size:21.94px;line-height:100px;font-weight:400;color:#2b2d33;letter-spacing:0.69px;-webkit-text-stroke:0.2px #2b2d33;">switch to <b style="letter-spacing:-0.05px;-webkit-text-stroke:0.45px #2b2d33">Profile vs. Profile</b> or</div>
<div class="t" style="left:1447.50px;transform-origin:0 50%;transform:scaleX(0.9479);top:571.30px;font-size:21.94px;line-height:100px;font-weight:400;color:#2b2d33;letter-spacing:0.69px;-webkit-text-stroke:0.2px #2b2d33;"><b style="letter-spacing:-0.05px;-webkit-text-stroke:0.45px #2b2d33">Multicomparison</b> views by selecting a tab</div>
<div class="t" style="left:1447.50px;transform-origin:0 50%;transform:scaleX(0.9479);top:599.70px;font-size:21.94px;line-height:100px;font-weight:400;color:#2b2d33;letter-spacing:0.69px;-webkit-text-stroke:0.2px #2b2d33;">at the top of the page.</div>
<div style="position:absolute;left:418px;top:796px;width:731px;height:581px;background:#fff;border-radius:13px;box-shadow:0 1.5px 4px rgba(0,0,0,0.14)"></div>
<div style="position:absolute;left:1168px;top:796px;width:731px;height:581px;background:#fff;border-radius:13px;box-shadow:0 1.5px 4px rgba(0,0,0,0.14)"></div>
<div class="t" style="left:437.20px;transform-origin:0 50%;transform:scaleX(0.9479);top:780.10px;font-size:21.84px;line-height:100px;font-weight:700;color:#23252b;letter-spacing:0.00px;-webkit-text-stroke:0.5px #23252b;">Followers trend</div>
<div class="t" style="left:437.50px;transform-origin:0 50%;transform:scaleX(0.9479);top:825.50px;font-size:19.73px;line-height:100px;font-weight:400;color:#4b4e56;letter-spacing:0.00px;-webkit-text-stroke:0.2px #4b4e56;">Last 30 Days • Aggregated by day</div>
<div style="position:absolute;left:997px;top:865.1px;width:134px;height:22.59999999999991px;box-sizing:border-box;border:1px solid #cdcdcd;border-radius:12px;background:#fff"></div>
<div class="t" style="left:464.00px;width:1200px;text-align:center;transform-origin:50% 50%;transform:scaleX(0.9479);top:826.20px;font-size:16.25px;line-height:100px;font-weight:700;color:#23252b;letter-spacing:0.00px;-webkit-text-stroke:0.5px #23252b;">PROFILE LEVEL</div>
<div class="t" style="left:1187.00px;transform-origin:0 50%;transform:scaleX(0.9479);top:780.10px;font-size:21.84px;line-height:100px;font-weight:700;color:#23252b;letter-spacing:0.00px;-webkit-text-stroke:0.5px #23252b;">Followers growth trend</div>
<div class="t" style="left:1187.50px;transform-origin:0 50%;transform:scaleX(0.9479);top:825.50px;font-size:19.73px;line-height:100px;font-weight:400;color:#4b4e56;letter-spacing:0.00px;-webkit-text-stroke:0.2px #4b4e56;">Last 30 Days • Aggregated by day</div>
<div style="position:absolute;left:1747px;top:865.1px;width:134px;height:22.59999999999991px;box-sizing:border-box;border:1px solid #cdcdcd;border-radius:12px;background:#fff"></div>
<div class="t" style="left:1214.00px;width:1200px;text-align:center;transform-origin:50% 50%;transform:scaleX(0.9479);top:826.20px;font-size:16.25px;line-height:100px;font-weight:700;color:#23252b;letter-spacing:0.00px;-webkit-text-stroke:0.5px #23252b;">PROFILE LEVEL</div>
<svg style="position:absolute;left:0;top:0" width="1970" height="1382" viewBox="0 0 1970 1382"><circle cx="664" cy="469.2" r="11.6" stroke="#23252b" stroke-width="1.6" fill="none"/><path d="M660.4 466.2 C660.4 463.59999999999997 662.2 462.2 664 462.2 C666.2 462.2 667.8 463.59999999999997 667.8 466.0 C667.8 468.59999999999997 664 468.8 664 471.59999999999997" stroke="#23252b" stroke-width="1.6" stroke-linecap="round" fill="none"/><circle cx="664" cy="474.8" r="1.1" fill="#23252b"/><circle cx="848.5" cy="469.1" r="2.3" fill="#23252b"/><circle cx="857.2" cy="469.1" r="2.3" fill="#23252b"/><circle cx="865.9000000000001" cy="469.1" r="2.3" fill="#23252b"/><circle cx="1134" cy="469.2" r="11.6" stroke="#23252b" stroke-width="1.6" fill="none"/><path d="M1130.4 466.2 C1130.4 463.59999999999997 1132.2 462.2 1134 462.2 C1136.2 462.2 1137.8 463.59999999999997 1137.8 466.0 C1137.8 468.59999999999997 1134 468.8 1134 471.59999999999997" stroke="#23252b" stroke-width="1.6" stroke-linecap="round" fill="none"/><circle cx="1134" cy="474.8" r="1.1" fill="#23252b"/><circle cx="1348.8999999999999" cy="469.1" r="2.3" fill="#23252b"/><circle cx="1357.6" cy="469.1" r="2.3" fill="#23252b"/><circle cx="1366.3" cy="469.1" r="2.3" fill="#23252b"/><circle cx="1465" cy="476.6" r="6" fill="#bfe3f7" stroke="#8aa6b8" stroke-width="1.6"/><path d="M1460.6 481 L1451 490.4" stroke="#555" stroke-width="3.2" stroke-linecap="round"/><circle cx="616.3" cy="829" r="11.6" stroke="#23252b" stroke-width="1.6" fill="none"/><path d="M612.6999999999999 826 C612.6999999999999 823.4 614.5 822 616.3 822 C618.5 822 620.0999999999999 823.4 620.0999999999999 825.8 C620.0999999999999 828.4 616.3 828.6 616.3 831.4" stroke="#23252b" stroke-width="1.6" stroke-linecap="round" fill="none"/><circle cx="616.3" cy="834.6" r="1.1" fill="#23252b"/><circle cx="1096.8999999999999" cy="829.2" r="2.3" fill="#23252b"/><circle cx="1105.6" cy="829.2" r="2.3" fill="#23252b"/><circle cx="1114.3" cy="829.2" r="2.3" fill="#23252b"/><circle cx="1441.4" cy="829" r="11.6" stroke="#23252b" stroke-width="1.6" fill="none"/><path d="M1437.8000000000002 826 C1437.8000000000002 823.4 1439.6000000000001 822 1441.4 822 C1443.6000000000001 822 1445.2 823.4 1445.2 825.8 C1445.2 828.4 1441.4 828.6 1441.4 831.4" stroke="#23252b" stroke-width="1.6" stroke-linecap="round" fill="none"/><circle cx="1441.4" cy="834.6" r="1.1" fill="#23252b"/><circle cx="1847.1" cy="829.2" r="2.3" fill="#23252b"/><circle cx="1855.8" cy="829.2" r="2.3" fill="#23252b"/><circle cx="1864.5" cy="829.2" r="2.3" fill="#23252b"/></svg>
<div class="t" style="left:-676.50px;width:1200px;text-align:right;transform-origin:100% 50%;transform:scaleX(0.9479);top:938.80px;font-size:18.78px;line-height:100px;font-weight:400;color:#2e3440;letter-spacing:0.00px;-webkit-text-stroke:0.2px #2e3440;">777.2M</div>
<div class="t" style="left:-676.50px;width:1200px;text-align:right;transform-origin:100% 50%;transform:scaleX(0.9479);top:997.70px;font-size:18.78px;line-height:100px;font-weight:400;color:#2e3440;letter-spacing:0.00px;-webkit-text-stroke:0.2px #2e3440;">777M</div>
<div class="t" style="left:-676.50px;width:1200px;text-align:right;transform-origin:100% 50%;transform:scaleX(0.9479);top:1056.80px;font-size:18.78px;line-height:100px;font-weight:400;color:#2e3440;letter-spacing:0.00px;-webkit-text-stroke:0.2px #2e3440;">776.8M</div>
<div class="t" style="left:-676.50px;width:1200px;text-align:right;transform-origin:100% 50%;transform:scaleX(0.9479);top:1115.90px;font-size:18.78px;line-height:100px;font-weight:400;color:#2e3440;letter-spacing:0.00px;-webkit-text-stroke:0.2px #2e3440;">776.6M</div>
<div class="t" style="left:-676.50px;width:1200px;text-align:right;transform-origin:100% 50%;transform:scaleX(0.9479);top:1175.00px;font-size:18.78px;line-height:100px;font-weight:400;color:#2e3440;letter-spacing:0.00px;-webkit-text-stroke:0.2px #2e3440;">776.4M</div>
<div class="t" style="left:-676.50px;width:1200px;text-align:right;transform-origin:100% 50%;transform:scaleX(0.9479);top:1233.90px;font-size:18.78px;line-height:100px;font-weight:400;color:#2e3440;letter-spacing:0.00px;-webkit-text-stroke:0.2px #2e3440;">776.2M</div>
<div class="t" style="left:43.50px;width:1200px;text-align:center;transform-origin:50% 50%;transform:scaleX(0.9479);top:1284.60px;font-size:18.57px;line-height:100px;font-weight:400;color:#2e3440;letter-spacing:0.00px;-webkit-text-stroke:0.2px #2e3440;">May 12</div>
<div class="t" style="left:236.50px;width:1200px;text-align:center;transform-origin:50% 50%;transform:scaleX(0.9479);top:1284.60px;font-size:18.57px;line-height:100px;font-weight:400;color:#2e3440;letter-spacing:0.00px;-webkit-text-stroke:0.2px #2e3440;">May 22</div>
<div class="t" style="left:429.50px;width:1200px;text-align:center;transform-origin:50% 50%;transform:scaleX(0.9479);top:1284.60px;font-size:18.57px;line-height:100px;font-weight:400;color:#2e3440;letter-spacing:0.00px;-webkit-text-stroke:0.2px #2e3440;">Jun 1</div>
<div class="t" style="left:355.8px;top:1113px;width:200px;height:20px;line-height:20px;text-align:center;font-size:18.5px;color:#7d8086;transform:rotate(-90deg)">Number of followers</div>
<div class="t" style="left:73.80px;width:1200px;text-align:right;transform-origin:100% 50%;transform:scaleX(0.9479);top:930.20px;font-size:18.78px;line-height:100px;font-weight:400;color:#2e3440;letter-spacing:0.00px;-webkit-text-stroke:0.2px #2e3440;">140K</div>
<div class="t" style="left:73.80px;width:1200px;text-align:right;transform-origin:100% 50%;transform:scaleX(0.9479);top:976.80px;font-size:18.78px;line-height:100px;font-weight:400;color:#2e3440;letter-spacing:0.00px;-webkit-text-stroke:0.2px #2e3440;">120K</div>
<div class="t" style="left:73.80px;width:1200px;text-align:right;transform-origin:100% 50%;transform:scaleX(0.9479);top:1023.40px;font-size:18.78px;line-height:100px;font-weight:400;color:#2e3440;letter-spacing:0.00px;-webkit-text-stroke:0.2px #2e3440;">100K</div>
<div class="t" style="left:73.80px;width:1200px;text-align:right;transform-origin:100% 50%;transform:scaleX(0.9479);top:1070.10px;font-size:18.78px;line-height:100px;font-weight:400;color:#2e3440;letter-spacing:0.00px;-webkit-text-stroke:0.2px #2e3440;">80K</div>
<div class="t" style="left:73.80px;width:1200px;text-align:right;transform-origin:100% 50%;transform:scaleX(0.9479);top:1116.70px;font-size:18.78px;line-height:100px;font-weight:400;color:#2e3440;letter-spacing:0.00px;-webkit-text-stroke:0.2px #2e3440;">60K</div>
<div class="t" style="left:73.80px;width:1200px;text-align:right;transform-origin:100% 50%;transform:scaleX(0.9479);top:1163.30px;font-size:18.78px;line-height:100px;font-weight:400;color:#2e3440;letter-spacing:0.00px;-webkit-text-stroke:0.2px #2e3440;">40K</div>
<div class="t" style="left:73.80px;width:1200px;text-align:right;transform-origin:100% 50%;transform:scaleX(0.9479);top:1209.90px;font-size:18.78px;line-height:100px;font-weight:400;color:#2e3440;letter-spacing:0.00px;-webkit-text-stroke:0.2px #2e3440;">20K</div>
<div class="t" style="left:73.80px;width:1200px;text-align:right;transform-origin:100% 50%;transform:scaleX(0.9479);top:1256.00px;font-size:18.78px;line-height:100px;font-weight:400;color:#2e3440;letter-spacing:0.00px;-webkit-text-stroke:0.2px #2e3440;">0</div>
<div class="t" style="left:793.60px;width:1200px;text-align:center;transform-origin:50% 50%;transform:scaleX(0.9479);top:1284.60px;font-size:18.57px;line-height:100px;font-weight:400;color:#2e3440;letter-spacing:0.00px;-webkit-text-stroke:0.2px #2e3440;">May 12</div>
<div class="t" style="left:986.40px;width:1200px;text-align:center;transform-origin:50% 50%;transform:scaleX(0.9479);top:1284.60px;font-size:18.57px;line-height:100px;font-weight:400;color:#2e3440;letter-spacing:0.00px;-webkit-text-stroke:0.2px #2e3440;">May 22</div>
<div class="t" style="left:1179.60px;width:1200px;text-align:center;transform-origin:50% 50%;transform:scaleX(0.9479);top:1284.60px;font-size:18.57px;line-height:100px;font-weight:400;color:#2e3440;letter-spacing:0.00px;-webkit-text-stroke:0.2px #2e3440;">Jun 1</div>
<div class="t" style="left:1106px;top:1124.7px;width:200px;height:20px;line-height:20px;text-align:center;font-size:18.6px;color:#7d8086;transform:rotate(-90deg)">Followers growth</div>
<svg style="position:absolute;left:0;top:0" width="1970" height="1382" viewBox="0 0 1970 1382"><line x1="537" y1="988.1" x2="1118" y2="988.1" stroke="#c3cbcf" stroke-width="2" stroke-dasharray="2 5.9" /><line x1="537" y1="1047.0" x2="1118" y2="1047.0" stroke="#c3cbcf" stroke-width="2" stroke-dasharray="2 5.9" /><line x1="537" y1="1106.1" x2="1118" y2="1106.1" stroke="#c3cbcf" stroke-width="2" stroke-dasharray="2 5.9" /><line x1="537" y1="1165.2" x2="1118" y2="1165.2" stroke="#c3cbcf" stroke-width="2" stroke-dasharray="2 5.9" /><line x1="537" y1="1224.3" x2="1118" y2="1224.3" stroke="#c3cbcf" stroke-width="2" stroke-dasharray="2 5.9" /><line x1="537" y1="1283.2" x2="1118" y2="1283.2" stroke="#c3cbcf" stroke-width="2" stroke-dasharray="2 5.9" /><line x1="536" y1="1306.3" x2="1118" y2="1306.3" stroke="#d3d3d3" stroke-width="2"/><line x1="643.5" y1="1307" x2="643.5" y2="1317.5" stroke="#cfcfcf" stroke-width="1.5"/><line x1="836.5" y1="1307" x2="836.5" y2="1317.5" stroke="#cfcfcf" stroke-width="1.5"/><line x1="1029.5" y1="1307" x2="1029.5" y2="1317.5" stroke="#cfcfcf" stroke-width="1.5"/><path d="M547.2 1305.0 C553.6 1295.5 560.1 1286.0 566.5 1275.0 C572.9 1264.0 579.4 1248.0 585.8 1239.0 C592.2 1230.0 598.7 1226.5 605.1 1221.0 C611.5 1215.5 618.0 1211.4 624.4 1206.0 C630.8 1200.6 637.3 1194.2 643.7 1188.5 C650.1 1182.8 656.6 1176.8 663.0 1172.0 C669.4 1167.2 675.9 1164.0 682.3 1160.0 C688.7 1156.0 695.2 1151.4 701.6 1148.0 C708.0 1144.6 714.5 1140.8 720.9 1139.5 C727.3 1138.2 733.8 1138.8 740.2 1137.5 C746.6 1136.2 753.1 1133.6 759.5 1131.0 C765.9 1128.4 772.4 1124.5 778.8 1122.0 C785.2 1119.5 791.7 1117.4 798.1 1116.0 C804.5 1114.6 811.0 1115.2 817.4 1113.5 C823.8 1111.8 830.3 1107.8 836.7 1105.0 C843.1 1102.2 849.6 1099.2 856.0 1097.0 C862.4 1094.8 868.9 1093.7 875.3 1092.0 C881.7 1090.3 888.2 1089.0 894.6 1087.0 C901.0 1085.0 907.5 1082.4 913.9 1080.0 C920.3 1077.6 926.8 1074.9 933.2 1072.5 C939.6 1070.1 946.1 1067.3 952.5 1065.5 C958.9 1063.7 965.4 1062.9 971.8 1061.5 C978.2 1060.1 984.7 1058.5 991.1 1057.0 C997.5 1055.5 1004.0 1055.5 1010.4 1052.5 C1016.8 1049.5 1023.3 1032.9 1029.7 1023.0 C1036.1 1013.1 1042.6 1002.3 1049.0 993.0 C1055.4 983.7 1061.9 975.3 1068.3 967.0 C1074.7 958.7 1081.2 944.3 1087.6 943.0 C1094.0 941.7 1100.5 941.3 1106.9 941.0" stroke="#1b74ef" stroke-width="3.2" fill="none" stroke-linecap="butt" stroke-linejoin="round"/><line x1="1285" y1="979.7" x2="1866" y2="979.7" stroke="#c3cbcf" stroke-width="2" stroke-dasharray="2 5.9" /><line x1="1285" y1="1026.3" x2="1866" y2="1026.3" stroke="#c3cbcf" stroke-width="2" stroke-dasharray="2 5.9" /><line x1="1285" y1="1072.9" x2="1866" y2="1072.9" stroke="#c3cbcf" stroke-width="2" stroke-dasharray="2 5.9" /><line x1="1285" y1="1119.6" x2="1866" y2="1119.6" stroke="#c3cbcf" stroke-width="2" stroke-dasharray="2 5.9" /><line x1="1285" y1="1166.2" x2="1866" y2="1166.2" stroke="#c3cbcf" stroke-width="2" stroke-dasharray="2 5.9" /><line x1="1285" y1="1212.8" x2="1866" y2="1212.8" stroke="#c3cbcf" stroke-width="2" stroke-dasharray="2 5.9" /><line x1="1285" y1="1259.4" x2="1866" y2="1259.4" stroke="#c3cbcf" stroke-width="2" stroke-dasharray="2 5.9" /><rect x="1288.50" y="1249.7" width="17.6" height="55.5" rx="3" fill="#1b74ef"/><rect x="1307.81" y="1062.8" width="17.6" height="242.4" rx="3" fill="#1b74ef"/><rect x="1327.12" y="1022.1" width="17.6" height="283.1" rx="3" fill="#1b74ef"/><rect x="1346.43" y="1160" width="17.6" height="145.2" rx="3" fill="#1b74ef"/><rect x="1365.74" y="1175.5" width="17.6" height="129.7" rx="3" fill="#1b74ef"/><rect x="1385.05" y="1170.2" width="17.6" height="135.0" rx="3" fill="#1b74ef"/><rect x="1404.36" y="1189.8" width="17.6" height="115.4" rx="3" fill="#1b74ef"/><rect x="1423.67" y="1209" width="17.6" height="96.2" rx="3" fill="#1b74ef"/><rect x="1442.98" y="1226" width="17.6" height="79.2" rx="3" fill="#1b74ef"/><rect x="1462.29" y="1229.8" width="17.6" height="75.4" rx="3" fill="#1b74ef"/><rect x="1481.60" y="1289.8" width="17.6" height="15.4" rx="3" fill="#1b74ef"/><rect x="1500.91" y="1252.7" width="17.6" height="52.5" rx="3" fill="#1b74ef"/><rect x="1520.22" y="1235.8" width="17.6" height="69.4" rx="3" fill="#1b74ef"/><rect x="1539.53" y="1264.5" width="17.6" height="40.7" rx="3" fill="#1b74ef"/><rect x="1558.84" y="1281.8" width="17.6" height="23.4" rx="3" fill="#1b74ef"/><rect x="1578.15" y="1240.2" width="17.6" height="65.0" rx="3" fill="#1b74ef"/><rect x="1597.46" y="1247.3" width="17.6" height="57.9" rx="3" fill="#1b74ef"/><rect x="1616.77" y="1271.4" width="17.6" height="33.8" rx="3" fill="#1b74ef"/><rect x="1636.08" y="1255.6" width="17.6" height="49.6" rx="3" fill="#1b74ef"/><rect x="1655.39" y="1250.3" width="17.6" height="54.9" rx="3" fill="#1b74ef"/><rect x="1674.70" y="1248.2" width="17.6" height="57.0" rx="3" fill="#1b74ef"/><rect x="1694.01" y="1255.6" width="17.6" height="49.6" rx="3" fill="#1b74ef"/><rect x="1713.32" y="1277.3" width="17.6" height="27.9" rx="3" fill="#1b74ef"/><rect x="1732.63" y="1272" width="17.6" height="33.2" rx="3" fill="#1b74ef"/><rect x="1751.94" y="1269.9" width="17.6" height="35.3" rx="3" fill="#1b74ef"/><rect x="1771.25" y="1063.6" width="17.6" height="241.6" rx="3" fill="#1b74ef"/><rect x="1790.56" y="1088" width="17.6" height="217.2" rx="3" fill="#1b74ef"/><rect x="1809.87" y="1099.9" width="17.6" height="205.3" rx="3" fill="#1b74ef"/><rect x="1829.18" y="1113.2" width="17.6" height="192.0" rx="3" fill="#1b74ef"/><rect x="1848.49" y="1289.8" width="17.6" height="15.4" rx="3" fill="#1b74ef"/><line x1="1285" y1="1306" x2="1868" y2="1306" stroke="#d3d3d3" stroke-width="2"/><line x1="1393.6" y1="1307" x2="1393.6" y2="1317.5" stroke="#cfcfcf" stroke-width="1.5"/><line x1="1586.4" y1="1307" x2="1586.4" y2="1317.5" stroke="#cfcfcf" stroke-width="1.5"/><line x1="1779.6" y1="1307" x2="1779.6" y2="1317.5" stroke="#cfcfcf" stroke-width="1.5"/></svg>
<div style="position:absolute;left:1697.8px;top:4.3px;width:269.20000000000005px;height:93.10000000000001px;box-sizing:border-box;border:10.2px solid #5571f7;border-radius:24px"></div>
<div style="position:absolute;left:345px;top:304.5px;width:460px;height:100.5px;background:#f2f2f5;border-radius:13px"></div>
<div style="position:absolute;left:365px;top:322.5px;width:141px;height:64.5px;box-sizing:border-box;border:1.5px solid #d6d6d6;border-radius:11px;background:#f2f2f5"></div>
<div style="position:absolute;left:530.5px;top:322.3px;width:252.5px;height:64.39999999999998px;box-sizing:border-box;border:1.5px solid #d3d3d3;border-radius:11px;background:linear-gradient(#f9f9f9,#e6e6e6)"></div>
<div class="t" style="left:397.50px;transform-origin:0 50%;transform:scaleX(0.9479);top:305.60px;font-size:28.70px;line-height:100px;font-weight:700;color:#2a2c31;letter-spacing:0.00px;-webkit-text-stroke:0.5px #2a2c31;filter:blur(0.4px);">Reset</div>
<div class="t" style="left:572.00px;transform-origin:0 50%;transform:scaleX(0.9479);top:305.40px;font-size:28.91px;line-height:100px;font-weight:700;color:#2a2c31;letter-spacing:0.00px;-webkit-text-stroke:0.5px #2a2c31;filter:blur(0.4px);">Save as view</div>
<div style="position:absolute;left:335.6px;top:295.1px;width:478.4px;height:119.19999999999999px;box-sizing:border-box;border:10.2px solid #5571f7;border-radius:24px"></div>
<svg style="position:absolute;left:0;top:0" width="1970" height="1382"><path d="M1968 1356 V1380 H1944 A24 24 0 0 0 1968 1356 Z" fill="#b0943e"/></svg>
<div style="position:absolute;left:0px;top:0px;width:1970px;height:2px;background:#92afbf"></div>
<div style="position:absolute;left:0px;top:1380px;width:1970px;height:2px;background:#92afbf"></div>
<div style="position:absolute;left:0px;top:0px;width:2px;height:1382px;background:#92afbf"></div>
<div style="position:absolute;left:1968px;top:0px;width:2px;height:1382px;background:#92afbf"></div>
</body></html>
